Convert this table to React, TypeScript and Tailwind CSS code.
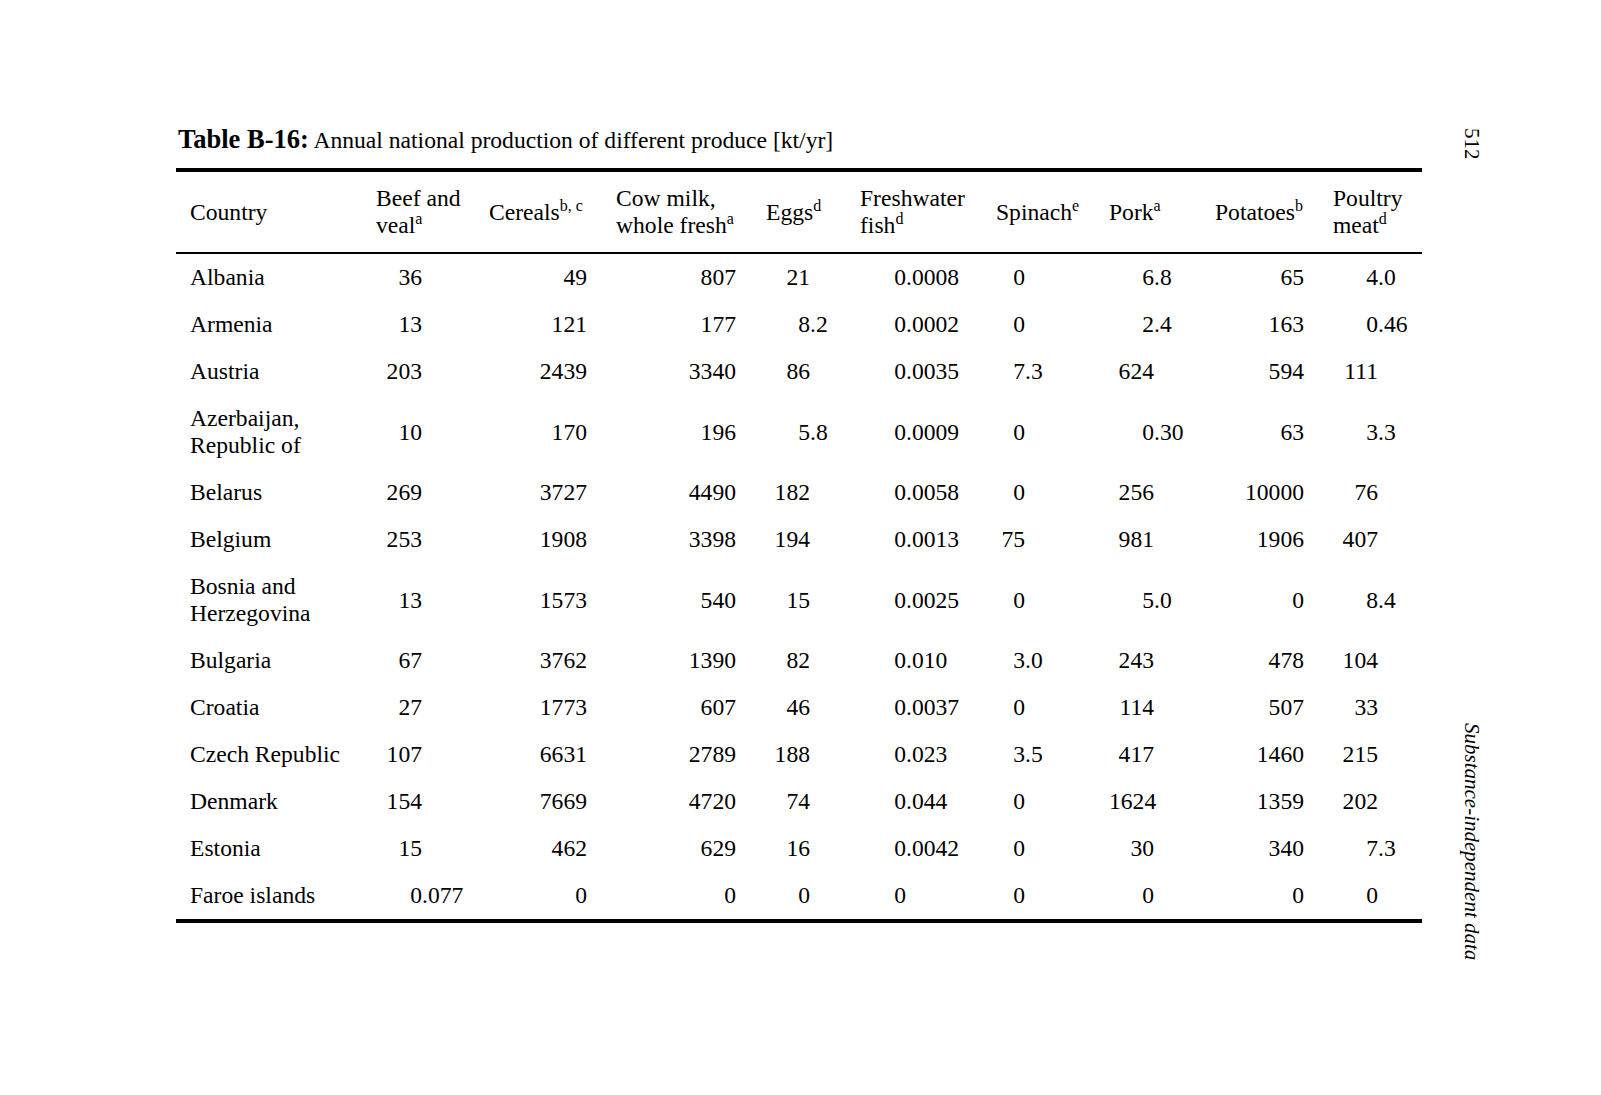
import React from "react";

type Col = { w: string; anchor: string };

const cols: Col[] = [
  { w: "w-[113px]", anchor: "w-[46px]" },
  { w: "w-[127px]", anchor: "w-[98px]" },
  { w: "w-[150px]", anchor: "w-[120px]" },
  { w: "w-[94px]", anchor: "w-[44px]" },
  { w: "w-[136px]", anchor: "w-[46px]" },
  { w: "w-[113px]", anchor: "w-[29px]" },
  { w: "w-[106px]", anchor: "w-[45px]" },
  { w: "w-[118px]", anchor: "w-[89px]" },
  { w: "w-[89px]", anchor: "w-[45px]" },
];

const rows: { name: React.ReactNode; vals: string[] }[] = [
  { name: "Albania", vals: ["36", "49", "807", "21", "0.0008", "0", "6.8", "65", "4.0"] },
  { name: "Armenia", vals: ["13", "121", "177", "8.2", "0.0002", "0", "2.4", "163", "0.46"] },
  { name: "Austria", vals: ["203", "2439", "3340", "86", "0.0035", "7.3", "624", "594", "111"] },
  {
    name: (
      <>
        Azerbaijan,
        <br />
        Republic of
      </>
    ),
    vals: ["10", "170", "196", "5.8", "0.0009", "0", "0.30", "63", "3.3"],
  },
  { name: "Belarus", vals: ["269", "3727", "4490", "182", "0.0058", "0", "256", "10000", "76"] },
  { name: "Belgium", vals: ["253", "1908", "3398", "194", "0.0013", "75", "981", "1906", "407"] },
  {
    name: (
      <>
        Bosnia and
        <br />
        Herzegovina
      </>
    ),
    vals: ["13", "1573", "540", "15", "0.0025", "0", "5.0", "0", "8.4"],
  },
  { name: "Bulgaria", vals: ["67", "3762", "1390", "82", "0.010", "3.0", "243", "478", "104"] },
  { name: "Croatia", vals: ["27", "1773", "607", "46", "0.0037", "0", "114", "507", "33"] },
  { name: "Czech Republic", vals: ["107", "6631", "2789", "188", "0.023", "3.5", "417", "1460", "215"] },
  { name: "Denmark", vals: ["154", "7669", "4720", "74", "0.044", "0", "1624", "1359", "202"] },
  { name: "Estonia", vals: ["15", "462", "629", "16", "0.0042", "0", "30", "340", "7.3"] },
  { name: "Faroe islands", vals: ["0.077", "0", "0", "0", "0", "0", "0", "0", "0"] },
];

function Sup({ children }: { children: React.ReactNode }) {
  return <sup className="text-[16px] top-[-0.55em]">{children}</sup>;
}

const headers: React.ReactNode[] = [
  <>
    Beef and
    <br />
    veal<Sup>a</Sup>
  </>,
  <>
    Cereals<Sup>b, c</Sup>
  </>,
  <>
    Cow milk,
    <br />
    whole fresh<Sup>a</Sup>
  </>,
  <>
    Eggs<Sup>d</Sup>
  </>,
  <>
    Freshwater
    <br />
    fish<Sup>d</Sup>
  </>,
  <>
    Spinach<Sup>e</Sup>
  </>,
  <>
    Pork<Sup>a</Sup>
  </>,
  <>
    Potatoes<Sup>b</Sup>
  </>,
  <>
    Poultry
    <br />
    meat<Sup>d</Sup>
  </>,
];

function Num({ v, anchor }: { v: string; anchor: string }) {
  const i = v.indexOf(".");
  const int = i >= 0 ? v.slice(0, i) : v;
  const frac = i >= 0 ? v.slice(i) : "";
  return (
    <div className="flex">
      <span className={`${anchor} shrink-0 text-right`}>{int}</span>
      <span className="whitespace-nowrap">{frac}</span>
    </div>
  );
}

export default function App() {
  return (
    <div className="w-[1601px] h-[1095px] bg-white text-black flex font-['Liberation_Serif','Times_New_Roman',serif]">
      <div className="ml-[176px] w-[1246px] shrink-0">
        <div className="pl-[2px] pt-[124px] leading-[30px] text-[23.6px] whitespace-nowrap">
          <span className="font-bold text-[26.5px]">Table B-16:</span> Annual national production of different
          produce [kt/yr]
        </div>
        <div className="mt-[13px] h-[4px] bg-black" />
        <div className="flex h-[80px] items-center text-[23.6px] leading-[27px]">
          <div className="w-[200px] shrink-0 pl-[14px]">Country</div>
          {headers.map((h, k) => (
            <div key={k} className={`${cols[k].w} shrink-0`}>
              {h}
            </div>
          ))}
        </div>
        <div className="h-[2px] bg-black" />
        {rows.map((r, ri) => (
          <div key={ri} className="flex items-center py-[10px] text-[23.6px] leading-[27px]">
            <div className="w-[200px] shrink-0 pl-[14px]">{r.name}</div>
            {r.vals.map((v, k) => (
              <div key={k} className={`${cols[k].w} shrink-0`}>
                <Num v={v} anchor={cols[k].anchor} />
              </div>
            ))}
          </div>
        ))}
        <div className="h-[4px] bg-black" />
      </div>
      <div className="ml-[38px] w-[24px] shrink-0 flex flex-col items-center pt-[128px]">
        <div className="[writing-mode:vertical-rl] text-[21px] leading-[24px]">512</div>
        <div className="mt-[563px] [writing-mode:vertical-rl] italic text-[21px] leading-[24px] whitespace-nowrap">
          Substance-independent data
        </div>
      </div>
    </div>
  );
}
